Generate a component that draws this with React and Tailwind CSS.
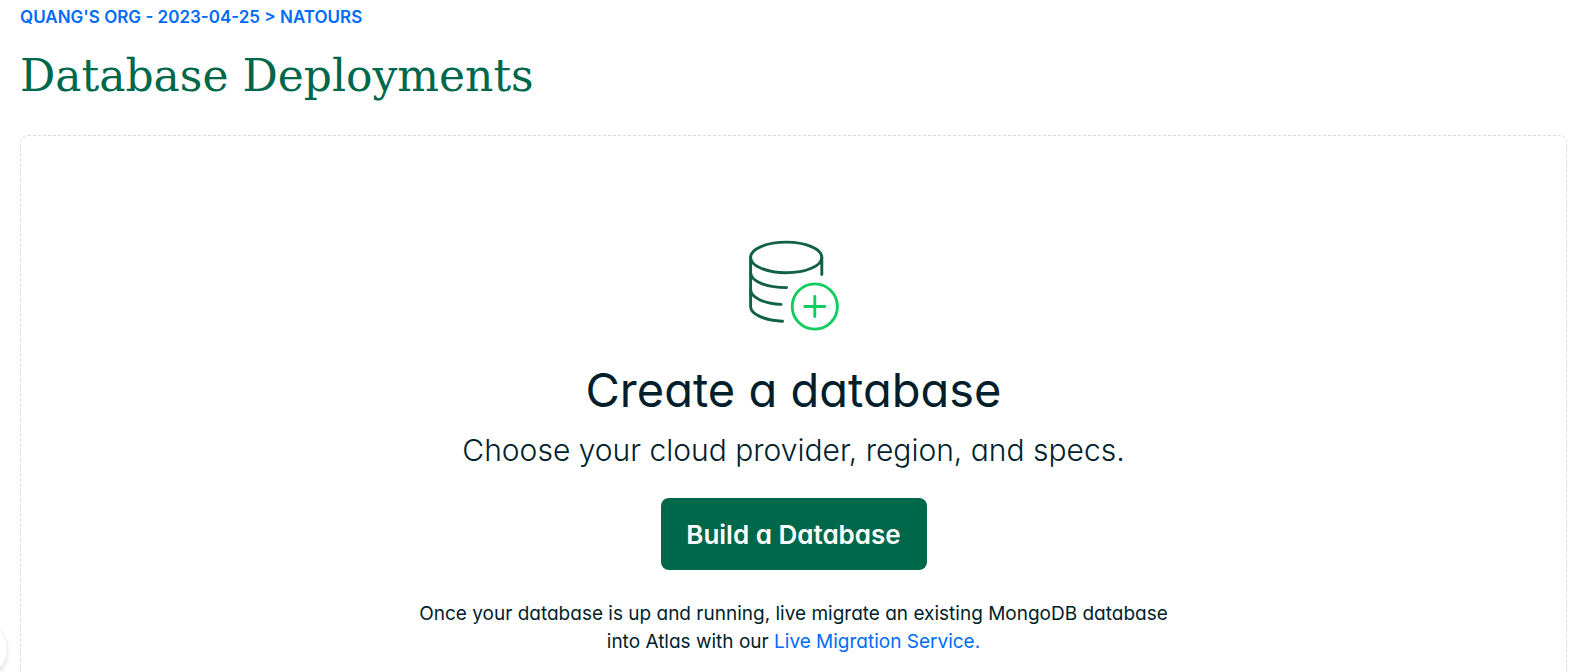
import React from 'react';

function DatabaseAddIcon() {
  return (
    <svg width="91" height="92" viewBox="-1 0 91 92" fill="none" strokeWidth="2.9" strokeLinecap="round" aria-hidden="true">
      <g stroke="#116149">
        <ellipse cx="37.2" cy="17.4" rx="35.6" ry="15.3" />
        <path d="M72.8 17.4V34.6" />
        <path d="M1.6 17.4V66.5C1.6 74 15 80.4 33.6 81.3" />
        <path d="M1.6 32.8C1.6 41.2 17.5 47.6 37.6 47.6" />
        <path d="M1.6 49.5C1.6 57 14 63.5 32 64.4" />
      </g>
      <g stroke="#13CC5F">
        <circle cx="65.8" cy="66.5" r="22.6" />
        <path d="M55.8 66.5H75.8M65.8 56.5V76.5" />
      </g>
    </svg>
  );
}

export default function App() {
  return (
    <div className="min-h-screen overflow-hidden bg-white font-['Inter','Liberation_Sans',sans-serif] text-[#001E2B] [font-feature-settings:'cv11']">
      <div className="flex min-h-screen flex-col pr-3 pl-5">
        <nav aria-label="Breadcrumb" className="pt-[5px] text-[17px] leading-6 font-semibold text-[#016BF8] uppercase">
          <a href="#org">Quang's Org - 2023-04-25</a> &gt; <a href="#project">Natours</a>
        </nav>
        <h1 className="mt-4 font-['DejaVu_Serif',serif] text-[44px] leading-[62px] text-[#00684A]">
          Database Deployments
        </h1>
        <main className="mt-7 flex grow flex-col items-center rounded-t-lg border border-b-0 border-dashed border-[#D8DCDC] px-6 pt-[104px] text-center">
          <DatabaseAddIcon />
          <h2 className="mt-7 text-[47px] leading-[60px]">Create a database</h2>
          <p className="mt-2.5 text-[30px] leading-10 font-light">Choose your cloud provider, region, and specs.</p>
          <button type="button" className="mt-7 h-[72px] min-w-[266px] shrink-0 rounded-lg bg-[#00684A] px-6 text-[26px] font-semibold text-white">
            Build a Database
          </button>
          <p className="mt-[30px] max-w-[800px] text-[19px] leading-7">
            Once your database is up and running, live migrate an existing MongoDB database
            <br />
            into Atlas with our{' '}
            <a href="#migration" className="text-[#016BF8]">Live Migration Service.</a>
          </p>
        </main>
      </div>
      <button type="button" aria-label="Open panel" className="fixed bottom-[-5px] left-[-48px] size-14 rounded-full border border-[#E8EDEB] bg-white shadow-md" />
    </div>
  );
}
